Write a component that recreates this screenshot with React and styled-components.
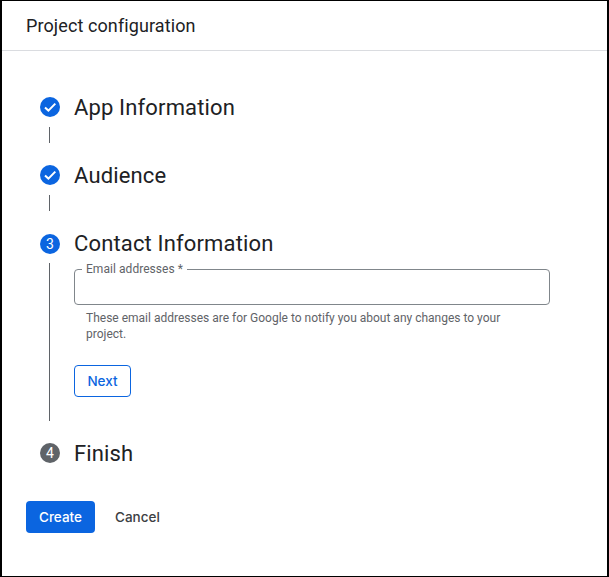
import React from 'react'
import styled, { createGlobalStyle } from 'styled-components'

const GlobalStyle = createGlobalStyle`
  html, body { margin: 0; padding: 0; background: #fff; }
  body { font-family: Roboto, Arial, sans-serif; color: #202124; }
  * { box-sizing: border-box; }
`

const Dialog = styled.div`
  width: 609px;
  height: 577px;
  border: 1px solid #000;
  border-left-width: 2px;
  border-right-width: 2px;
  background: #fff;
  display: flex;
  flex-direction: column;
`

const Header = styled.div`
  height: 50px;
  flex: none;
  padding: 0 0 0 24px;
  display: flex;
  align-items: center;
  border-bottom: 1px solid #dadce0;
  font-family: Roboto, sans-serif;
  font-size: 18px;
  letter-spacing: 0.1px;
  color: #202124;
`

const Stepper = styled.div`
  padding: 46px 0 0 38px;
`

const Step = styled.div`
  display: grid;
  grid-template-columns: 20px 1fr;
  column-gap: 14px;
`

const Badge = styled.div`
  width: 20px;
  height: 20px;
  margin: ${(p) => (p.$drop ? '1px 0 -1px' : '0')};
  border-radius: 50%;
  background: ${(p) => (p.$muted ? '#5f6368' : '#0b65e0')};
  color: #fff;
  font-size: 14px;
  display: flex;
  align-items: center;
  justify-content: center;
`

const StepTitle = styled.div`
  font-family: Roboto, sans-serif;
  font-size: 22px;
  line-height: 22px;
  margin-bottom: -2px;
  letter-spacing: 0.15px;
  color: #202124;
`

const Connector = styled.div`
  width: 1px;
  height: ${(p) => p.$height}px;
  background: #5f6368;
  margin: 10px 0 22px 9px;
`

const StepBody = styled.div`
  padding-top: 10px;
  min-width: 0;
`

const EmailField = styled.fieldset`
  width: 476px;
  height: 42px;
  margin: 0;
  padding: 0 0 0 7px;
  border: 1px solid #80868b;
  border-radius: 4px;
  display: block;
`

const EmailLabel = styled.legend`
  padding: 0 4px;
  font-size: 12px;
  line-height: 12px;
  letter-spacing: 0.05px;
  color: #5f6368;
`

const EmailInput = styled.input`
  display: block;
  width: 100%;
  height: 28px;
  border: 0;
  outline: 0;
  background: transparent;
  font: 14px Roboto, sans-serif;
`

const Helper = styled.p`
  width: 440px;
  margin: 5px 0 0 12px;
  font-size: 12px;
  line-height: 16px;
  color: #5f6368;
`

const OutlineButton = styled.button`
  display: block;
  width: 57px;
  height: 32px;
  margin-top: 23px;
  padding: 0 0 1px;
  background: #fff;
  border: 1px solid #0b65e0;
  border-radius: 4px;
  color: #0b65e0;
  font-family: Inter, Roboto, sans-serif;
  font-size: 13.5px;
  font-weight: 500;
`

const Actions = styled.div`
  display: flex;
  align-items: center;
  gap: 20px;
  margin: 38px 0 0 24px;
`

const PrimaryButton = styled.button`
  width: 69px;
  height: 32px;
  padding: 0 0 1px;
  border: 0;
  border-radius: 4px;
  background: #0b65e0;
  color: #fff;
  font-family: Inter, Roboto, sans-serif;
  font-size: 13.5px;
  font-weight: 500;
`

const TextButton = styled.button`
  padding: 0 0 1px;
  border: 0;
  background: transparent;
  color: #3c4043;
  font-family: Inter, Roboto, sans-serif;
  font-size: 13.5px;
  font-weight: 500;
`

const Check = () => (
  <svg width="16" height="16" viewBox="0 0 16 16" fill="none">
    <path d="M3 8.4 6.4 11.6 13.3 4.6" stroke="#fff" strokeWidth="2" />
  </svg>
)

const App = () => {
  return (
    <Dialog>
      <GlobalStyle />
      <Header>Project configuration</Header>
      <Stepper>
        <Step>
          <Badge><Check /></Badge>
          <StepTitle>App Information</StepTitle>
          <Connector $height={16} />
        </Step>
        <Step>
          <Badge><Check /></Badge>
          <StepTitle>Audience</StepTitle>
          <Connector $height={16} />
        </Step>
        <Step>
          <Badge $drop>3</Badge>
          <StepTitle>Contact Information</StepTitle>
          <Connector $height={158} />
          <StepBody>
            <EmailField>
              <EmailLabel>Email addresses *</EmailLabel>
              <EmailInput type="email" />
            </EmailField>
            <Helper>These email addresses are for Google to notify you about any changes to your project.</Helper>
            <OutlineButton>Next</OutlineButton>
          </StepBody>
        </Step>
        <Step>
          <Badge $muted>4</Badge>
          <StepTitle>Finish</StepTitle>
        </Step>
      </Stepper>
      <Actions>
        <PrimaryButton>Create</PrimaryButton>
        <TextButton>Cancel</TextButton>
      </Actions>
    </Dialog>
  )
}

export default App
